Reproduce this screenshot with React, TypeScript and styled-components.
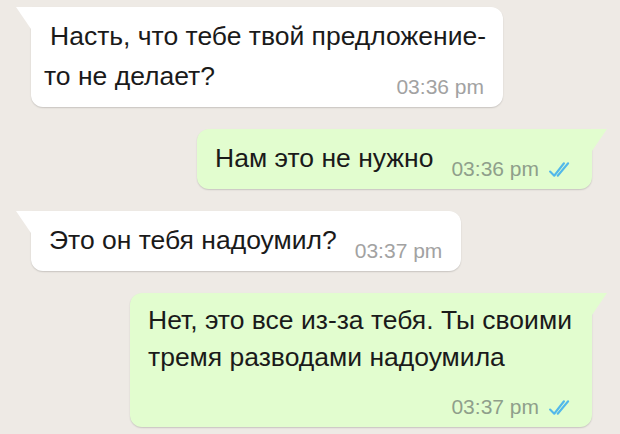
import * as React from "react";
import styled, { createGlobalStyle, css } from "styled-components";

interface Message {
  text: string;
  time: string;
  out?: boolean;
  hang?: boolean;
  lineHeight?: number;
  maxWidth?: number;
}

const GlobalStyle = createGlobalStyle`
  *, *::before, *::after {
    box-sizing: border-box;
  }
  html, body {
    margin: 0;
    height: 100%;
    background: #eeeae5;
  }
  body {
    font-family: "Liberation Sans", Arial, sans-serif;
  }
`;

const Chat = styled.div`
  display: flex;
  flex-direction: column;
  gap: 22px;
  padding: 7px 28px 0 31px;
`;

const Bubble = styled.div<{ $out?: boolean; $hang?: boolean; $lh: number; $max: number }>`
  position: relative;
  max-width: ${(p) => p.$max}px;
  padding: 9px 10px 10px ${(p) => (p.$hang ? "13px" : "18px")};
  text-indent: ${(p) => (p.$hang ? "6px" : "0")};
  font-size: 26.5px;
  line-height: ${(p) => p.$lh}px;
  color: #1a1a1a;
  background: ${(p) => (p.$out ? "#e2fdcf" : "#ffffff")};
  box-shadow: 0 1px 1.5px rgba(0, 0, 0, 0.16);
  align-self: ${(p) => (p.$out ? "flex-end" : "flex-start")};
  border-radius: ${(p) => (p.$out ? "12px 0 12px 12px" : "0 12px 12px 12px")};

  &::before {
    content: "";
    position: absolute;
    top: 0;
    width: 15px;
    height: 22px;
    background: inherit;
    ${(p) =>
      p.$out
        ? css`
            right: -15px;
            clip-path: polygon(0 0, 100% 0, 0 100%);
          `
        : css`
            left: -15px;
            clip-path: polygon(0 0, 100% 0, 100% 100%);
          `}
  }
`;

const Meta = styled.span<{ $out?: boolean }>`
  float: right;
  display: flex;
  align-items: center;
  gap: 9px;
  margin: 21px 9px 0 18px;
  text-indent: 0;
  font-size: 21px;
  line-height: 20px;
  color: ${(p) => (p.$out ? "#8f9f8b" : "#a2a2a2")};
`;

const Ticks = styled.svg`
  width: 25px;
  height: 17px;
  display: block;
`;

function DoubleTick() {
  return (
    <Ticks viewBox="0 0 18 12" fill="none" stroke="#52b8ea" strokeWidth="1.5" strokeLinecap="round" strokeLinejoin="round">
      <path d="M1.5 7.5 L4.5 10.5 L11.5 1.5" />
      <path d="M7 10.5 L14.5 1.5" />
    </Ticks>
  );
}

const messages: Message[] = [
  { text: "Насть, что тебе твой предложение-то не делает?", time: "03:36 pm", hang: true, lineHeight: 40 },
  { text: "Нам это не нужно", time: "03:36 pm", out: true },
  { text: "Это он тебя надоумил?", time: "03:37 pm" },
  {
    text: "Нет, это все из-за тебя. Ты своими тремя разводами надоумила",
    time: "03:37 pm",
    out: true,
    lineHeight: 37,
    maxWidth: 462,
  },
];

export default function App(): React.ReactElement {
  return (
    <>
      <GlobalStyle />
      <Chat>
        {messages.map((m, i) => (
          <Bubble key={i} $out={m.out} $hang={m.hang} $lh={m.lineHeight ?? 40} $max={m.maxWidth ?? 472}>
            {m.text}
            <Meta $out={m.out}>
              {m.time}
              {m.out && <DoubleTick />}
            </Meta>
          </Bubble>
        ))}
      </Chat>
    </>
  );
}
